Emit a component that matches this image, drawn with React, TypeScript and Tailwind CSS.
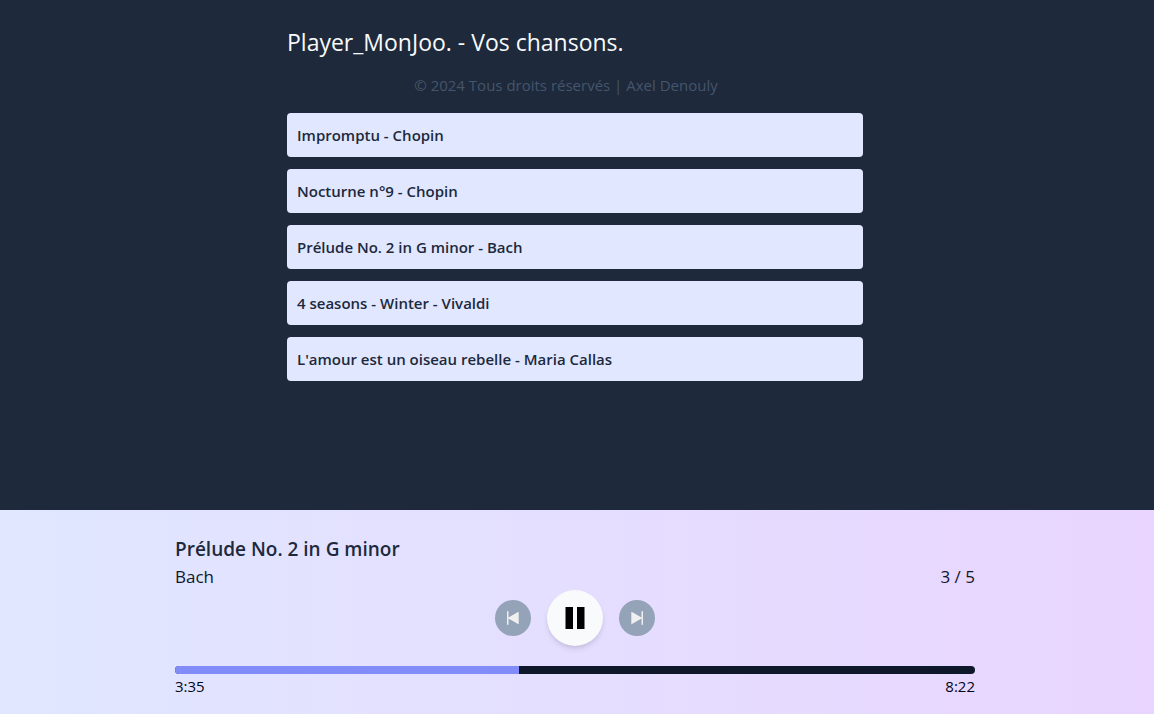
const songs = [
  { title: "Impromptu", artist: "Chopin" },
  { title: "Nocturne n°9", artist: "Chopin" },
  { title: "Prélude No. 2 in G minor", artist: "Bach" },
  { title: "4 seasons - Winter", artist: "Vivaldi" },
  { title: "L'amour est un oiseau rebelle", artist: "Maria Callas" },
];

function SkipIcon({ flipped = false }: { flipped?: boolean }) {
  return (
    <svg viewBox="0 0 12 14" className={flipped ? "h-3.5 w-3 rotate-180" : "h-3.5 w-3"} fill="currentColor" aria-hidden="true">
      <path d="M0 .8Q0 0 .75 0T1.5.8V6.6L11 .9Q11.7.6 11.7 1.4V12.6Q11.7 13.4 11 13.1L1.5 7.4V13.2Q1.5 14 .75 14T0 13.2z" />
    </svg>
  );
}

export default function App() {
  return (
    <div className="flex min-h-screen flex-col bg-[#1e293b] font-['Open_Sans','Noto_Sans',sans-serif] text-[15px]">
      <main className="grow px-1 pt-6 pr-2">
        <div className="mx-auto max-w-xl">
          <h1 className="text-[23px] leading-9 text-slate-50">Player_MonJoo. - Vos chansons.</h1>
          <p className="pt-[13px] pr-[18px] pb-4 text-center leading-6 text-slate-600">© 2024 Tous droits réservés | Axel Denouly</p>
          <ul className="space-y-3">
            {songs.map((s) => (
              <li key={s.title}>
                <button className="h-11 w-full rounded bg-[#e0e7ff] px-2.5 text-left font-semibold text-slate-800">
                  {s.title} - {s.artist}
                </button>
              </li>
            ))}
          </ul>
        </div>
      </main>
      <footer className="bg-linear-to-r from-[#e0e7ff] to-[#e9d5ff] px-1 pt-6 pr-2 pb-4">
        <div className="mx-auto max-w-[800px]">
          <h2 className="pt-px text-[19px] leading-7 font-semibold text-slate-800">Prélude No. 2 in G minor</h2>
          <div className="flex justify-between text-[17px] leading-[27px] text-slate-900">
            <p>Bach</p>
            <p>3 / 5</p>
          </div>
          <div className="flex items-center justify-center gap-4">
            <button aria-label="Précédent" className="flex size-9 items-center justify-center rounded-full bg-[#94a3b8] text-[#f0f0f0]"><SkipIcon /></button>
            <button aria-label="Pause" className="flex size-14 items-center justify-center rounded-full bg-slate-50 shadow-md">
              <svg viewBox="0 0 20 22" className="h-[22px] w-5" aria-hidden="true"><path d="M.5 0h7.5v22H.5zM12 0h7.5v22h-7.5z" /></svg>
            </button>
            <button aria-label="Suivant" className="flex size-9 items-center justify-center rounded-full bg-[#94a3b8] text-[#f0f0f0]"><SkipIcon flipped /></button>
          </div>
          <div className="mt-5 h-2 overflow-hidden rounded bg-slate-900"><div className="h-full w-[43%] bg-[#818cf8]" /></div>
          <div className="flex justify-between leading-6 text-slate-950"><span>3:35</span><span>8:22</span></div>
        </div>
      </footer>
    </div>
  );
}
